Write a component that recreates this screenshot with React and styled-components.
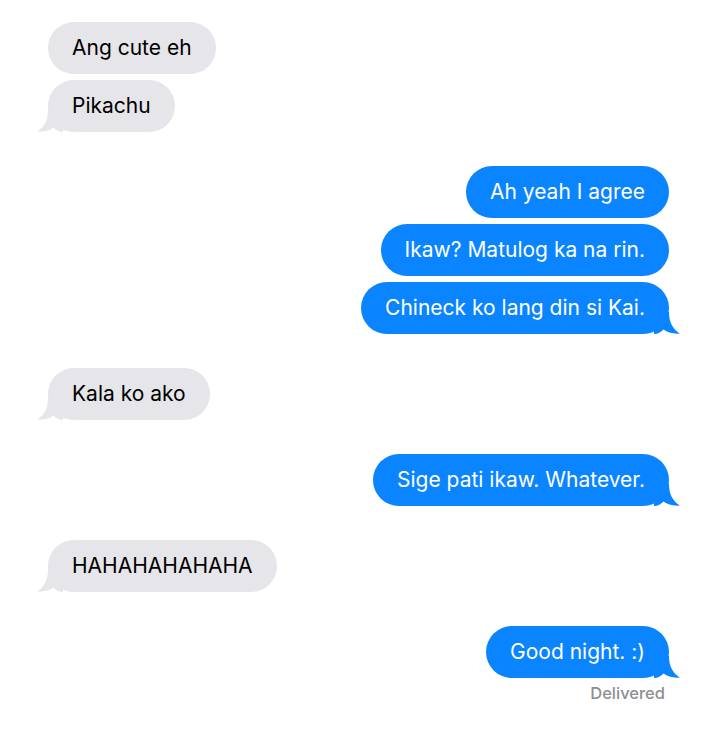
import React from "react";
import styled, { createGlobalStyle, css } from "styled-components";

const GlobalStyle = createGlobalStyle`
  html, body {
    margin: 0;
    padding: 0;
    background: #ffffff;
  }
  body {
    font-family: Inter, "Liberation Sans", Arial, sans-serif;
    -webkit-font-smoothing: antialiased;
  }
`;

const messages = [
  { from: "them", text: "Ang cute eh" },
  { from: "them", text: "Pikachu", tail: true },
  { from: "me", text: "Ah yeah I agree" },
  { from: "me", text: "Ikaw? Matulog ka na rin." },
  { from: "me", text: "Chineck ko lang din si Kai.", tail: true },
  { from: "them", text: "Kala ko ako", tail: true },
  { from: "me", text: "Sige pati ikaw. Whatever.", tail: true },
  { from: "them", text: "HAHAHAHAHAHA", tail: true },
  { from: "me", text: "Good night. :)", tail: true },
];

const Thread = styled.main`
  width: 720px;
  height: 734px;
  box-sizing: border-box;
  padding: 22px 51px 0 48px;
  display: flex;
  flex-direction: column;
`;

const Bubble = styled.div`
  position: relative;
  max-width: 78%;
  box-sizing: border-box;
  padding: 12px 24px;
  border-radius: 26px;
  font-size: 21px;
  line-height: 28px;
  margin-top: ${(p) => (p.$first ? "0" : p.$newGroup ? "34px" : "6px")};
  ${(p) =>
    p.$mine
      ? css`
          align-self: flex-end;
          background: #0a84ff;
          color: #ffffff;
        `
      : css`
          align-self: flex-start;
          background: #e5e5ea;
          color: #000000;
        `}
`;

const TailSvg = styled.svg`
  position: absolute;
  bottom: 0;
  width: 26px;
  height: 22px;
  ${(p) =>
    p.$mine
      ? css`
          right: -11px;
          transform: scaleX(-1);
        `
      : css`
          left: -11px;
        `}
`;

const Status = styled.div`
  align-self: flex-end;
  margin-top: 5px;
  margin-right: 4px;
  font-size: 16.5px;
  font-weight: 500;
  color: #8e8e93;
`;

function Tail({ mine }) {
  return (
    <TailSvg $mine={mine} viewBox="0 0 26 22" aria-hidden="true">
      <path
        d="M11 0 C11 10 7.5 17 0 21.5 C6.5 22.2 12.5 20.5 16.5 17.5 C19 20 22 22 26 22 L26 0 Z"
        fill={mine ? "#0a84ff" : "#e5e5ea"}
      />
    </TailSvg>
  );
}

export default function App() {
  return (
    <>
      <GlobalStyle />
      <Thread>
        {messages.map((m, i) => {
          const prev = messages[i - 1];
          const mine = m.from === "me";
          return (
            <Bubble
              key={i}
              $mine={mine}
              $first={i === 0}
              $newGroup={prev && prev.from !== m.from}
            >
              {m.text}
              {m.tail && <Tail mine={mine} />}
            </Bubble>
          );
        })}
        <Status>Delivered</Status>
      </Thread>
    </>
  );
}
